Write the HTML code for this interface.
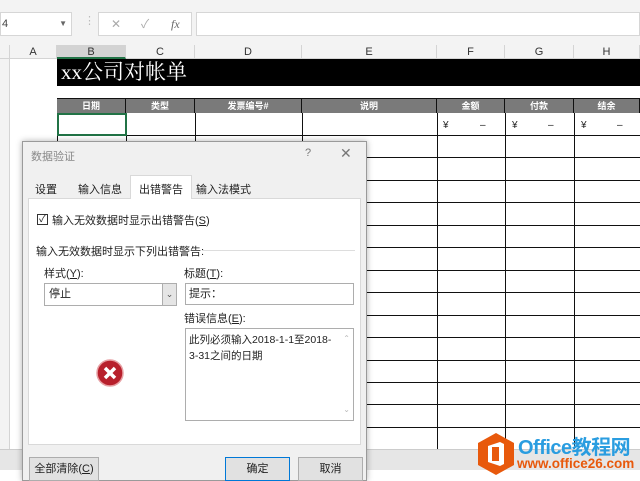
<!DOCTYPE html><html><head><meta charset="utf-8"><style>
*{margin:0;padding:0;box-sizing:border-box}
body{width:640px;height:481px;overflow:hidden;background:#fff;position:relative;font-family:"Liberation Sans","Noto Sans CJK SC",sans-serif;font-size:11px;color:#222}
.a{position:absolute}
.vl{position:absolute;width:1px;background:#111}
.hl{position:absolute;height:1px;background:#111}
.ch{position:absolute;top:45px;height:14px;text-align:center;font-size:11px;color:#333;border-right:1px solid #d4d4d4;line-height:14px}
.th{position:absolute;top:99px;height:14px;background:#7a7a7a;color:#fff;font-size:9px;text-align:center;line-height:14px;border-right:1px solid #111;font-weight:bold}
.btn{position:absolute;height:24px;border:1px solid #adadad;background:#e1e1e1;text-align:center;line-height:22px;font-size:11px}
</style></head><body>
<div class="a" style="left:0;top:0;width:640px;height:45px;background:#f3f3f3"></div>
<div class="a" style="left:0;top:12px;width:72px;height:24px;background:#fff;border:1px solid #d6d6d6;line-height:22px;padding-left:1px;color:#444">4<span style="position:absolute;right:4px;font-size:8px;color:#666">▼</span></div>
<div class="a" style="left:84px;top:14px;color:#bbb">⋮</div>
<div class="a" style="left:98px;top:12px;width:94px;height:24px;background:#fff;border:1px solid #d6d6d6;color:#aaa;line-height:22px;font-size:12px"><span style="position:absolute;left:12px">✕</span><span style="position:absolute;left:42px">✓</span><span style="position:absolute;left:72px;font-style:italic;font-family:'Liberation Serif';color:#666">fx</span></div>
<div class="a" style="left:196px;top:12px;width:444px;height:24px;background:#fff;border:1px solid #d6d6d6"></div>
<div class="a" style="left:0;top:45px;width:640px;height:14px;background:#f3f3f3;border-bottom:1px solid #d4d4d4"></div>
<div class="ch" style="left:0;width:10px"></div>
<div class="ch" style="left:10px;width:47px">A</div>
<div class="ch" style="left:57px;width:69px;background:#d3d3d3;border-bottom:2px solid #217346">B</div>
<div class="ch" style="left:126px;width:69px">C</div>
<div class="ch" style="left:195px;width:107px">D</div>
<div class="ch" style="left:302px;width:135px">E</div>
<div class="ch" style="left:437px;width:68px">F</div>
<div class="ch" style="left:505px;width:69px">G</div>
<div class="ch" style="left:574px;width:66px">H</div>
<div class="a" style="left:0;top:59px;width:10px;height:390px;background:#f3f3f3;border-right:1px solid #d4d4d4"></div>
<div class="a" style="left:57px;top:59px;width:583px;height:27px;background:#000;color:#fff;font-size:21px;line-height:27px;padding-left:4px;font-family:'Liberation Serif','Noto Serif CJK SC',serif">xx公司对帐单</div>
<div class="th" style="left:57px;width:69px">日期</div>
<div class="th" style="left:126px;width:69px">类型</div>
<div class="th" style="left:195px;width:107px">发票编号#</div>
<div class="th" style="left:302px;width:135px">说明</div>
<div class="th" style="left:437px;width:68px">金额</div>
<div class="th" style="left:505px;width:69px">付款</div>
<div class="th" style="left:574px;width:66px">结余</div>
<div class="hl" style="left:57px;top:98px;width:583px"></div>
<div class="vl" style="left:57px;top:113px;height:336px"></div>
<div class="vl" style="left:126px;top:113px;height:336px"></div>
<div class="vl" style="left:195px;top:113px;height:336px"></div>
<div class="vl" style="left:302px;top:113px;height:336px"></div>
<div class="vl" style="left:437px;top:113px;height:336px"></div>
<div class="vl" style="left:505px;top:113px;height:336px"></div>
<div class="vl" style="left:574px;top:113px;height:336px"></div>
<div class="hl" style="left:57px;top:135px;width:583px"></div>
<div class="hl" style="left:57px;top:157px;width:583px"></div>
<div class="hl" style="left:57px;top:180px;width:583px"></div>
<div class="hl" style="left:57px;top:202px;width:583px"></div>
<div class="hl" style="left:57px;top:225px;width:583px"></div>
<div class="hl" style="left:57px;top:247px;width:583px"></div>
<div class="hl" style="left:57px;top:270px;width:583px"></div>
<div class="hl" style="left:57px;top:292px;width:583px"></div>
<div class="hl" style="left:57px;top:315px;width:583px"></div>
<div class="hl" style="left:57px;top:337px;width:583px"></div>
<div class="hl" style="left:57px;top:360px;width:583px"></div>
<div class="hl" style="left:57px;top:382px;width:583px"></div>
<div class="hl" style="left:57px;top:404px;width:583px"></div>
<div class="hl" style="left:57px;top:427px;width:583px"></div>
<div class="a" style="left:57px;top:113px;width:70px;height:23px;border:2px solid #217346"></div>
<div class="a" style="left:443px;top:120px;font-size:10px">¥</div><div class="a" style="left:480px;top:120px;font-size:10px">–</div>
<div class="a" style="left:512px;top:120px;font-size:10px">¥</div><div class="a" style="left:548px;top:120px;font-size:10px">–</div>
<div class="a" style="left:581px;top:120px;font-size:10px">¥</div><div class="a" style="left:617px;top:120px;font-size:10px">–</div>
<div class="a" style="left:0;top:449px;width:640px;height:21px;background:#e6e6e6;border-top:1px solid #ccc"></div>
<!-- dialog -->
<div class="a" style="left:22px;top:141px;width:345px;height:340px;background:#f0f0f0;border:1px solid #9a9a9a;box-shadow:0 0 6px rgba(0,0,0,.3)">
<div class="a" style="left:8px;top:6px;color:#888;font-size:11px">数据验证</div>
<div class="a" style="left:282px;top:5px;color:#777">?</div>
<div class="a" style="left:317px;top:3px;color:#777;font-size:14px">✕</div>
<div class="a" style="left:5px;top:56px;width:333px;height:247px;background:#fff;border:1px solid #d9d9d9"></div>
<div class="a" style="left:12px;top:39px">设置</div>
<div class="a" style="left:55px;top:39px">输入信息</div>
<div class="a" style="left:107px;top:33px;width:62px;height:24px;background:#fff;border:1px solid #d9d9d9;border-bottom:none;padding:5px 0 0 8px">出错警告</div>
<div class="a" style="left:173px;top:39px">输入法模式</div>
<div class="a" style="left:14px;top:72px;width:11px;height:11px;border:1px solid #333;font-size:10px;line-height:9px;text-align:center">✓</div>
<div class="a" style="left:29px;top:70px">输入无效数据时显示出错警告(<u>S</u>)</div>
<div class="a" style="left:13px;top:101px">输入无效数据时显示下列出错警告:</div>
<div class="a" style="left:180px;top:108px;width:152px;height:1px;background:#ddd"></div>
<div class="a" style="left:21px;top:123px">样式(<u>Y</u>):</div>
<div class="a" style="left:161px;top:123px">标题(<u>T</u>):</div>
<div class="a" style="left:21px;top:141px;width:133px;height:23px;border:1px solid #adadad;background:#fff;line-height:21px;padding-left:4px">停止<span style="position:absolute;right:0;top:0;width:14px;height:21px;background:#e5e5e5;border-left:1px solid #adadad;font-size:9px;text-align:center;color:#555">⌄</span></div>
<div class="a" style="left:162px;top:141px;width:169px;height:22px;border:1px solid #adadad;background:#fff;line-height:20px;padding-left:3px">提示：</div>
<div class="a" style="left:161px;top:168px">错误信息(<u>E</u>):</div>
<div class="a" style="left:162px;top:186px;width:169px;height:93px;border:1px solid #adadad;background:#fff;padding:3px 18px 0 3px;line-height:16px;font-size:10.5px">此列必须输入2018-1-1至2018-3-31之间的日期<span style="position:absolute;right:3px;top:2px;color:#bbb;font-size:8px">⌃</span><span style="position:absolute;right:3px;bottom:2px;color:#bbb;font-size:8px">⌄</span></div>
<svg class="a" style="left:73px;top:217px" width="28" height="28"><circle cx="14" cy="14" r="13" fill="#b8202c" stroke="#e7a0a4" stroke-width="1.5"/><path d="M9 9L19 19M19 9L9 19" stroke="#fff" stroke-width="3.5"/></svg>
<div class="btn" style="left:6px;top:315px;width:70px">全部清除(<u>C</u>)</div>
<div class="btn" style="left:202px;top:315px;width:65px;border:1px solid #0078d7">确定</div>
<div class="btn" style="left:275px;top:315px;width:65px">取消</div>
</div>
<svg class="a" style="left:476px;top:432px" width="40" height="44"><polygon points="20,1 38,11 38,33 20,43 2,33 2,11" fill="#e8590c"/><path d="M12 14L24 10L28 12V32L24 34L12 30Z" fill="#fff"/><rect x="16" y="15" width="7" height="14" fill="#e8590c"/></svg>
<div class="a" style="left:518px;top:431px;font-size:20px;font-weight:bold;color:#2a9de0;letter-spacing:-0.5px">Office教程网</div>
<div class="a" style="left:517px;top:456px;font-size:13.5px;font-weight:bold;color:#e8590c">www.office26.com</div>
</body></html>
